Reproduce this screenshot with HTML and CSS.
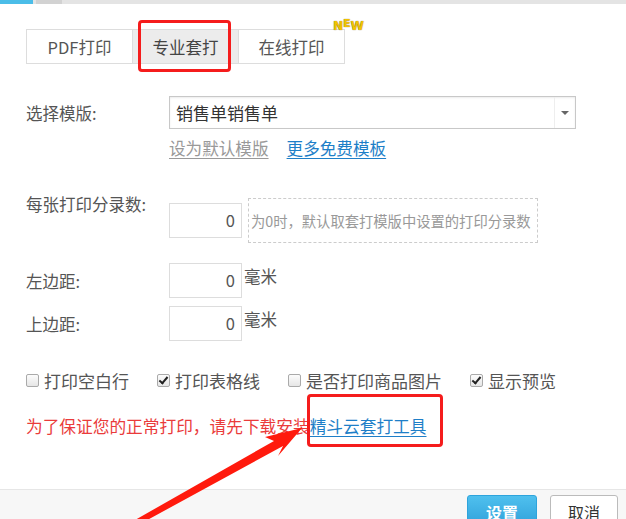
FILE: index.html
```html
<!DOCTYPE html>
<html lang="zh-CN">
<head>
  <meta charset="UTF-8" />
  <title>打印设置</title>
  <link rel="stylesheet" href="styles.css">
</head>
<body>
  <div class="topbar">
    <span class="topbar-active"></span>
    <span class="topbar-tab"></span>
  </div>

  <div class="panel">
    <div class="tabs">
      <div class="tab">PDF打印</div>
      <div class="tab active">专业套打</div>
      <div class="tab">在线打印</div>
      <span class="new-badge">N<sup>E</sup>W</span>
      <span class="mark mark-tab"></span>
    </div>

    <div class="row row-select">
      <label>选择模版:</label>
      <div class="select">
        <span>销售单销售单</span>
        <span class="select-arrow"></span>
      </div>
    </div>
    <div class="row row-links">
      <span></span>
      <div class="links">
        <a class="link-gray">设为默认模版</a>
        <a class="link-blue">更多免费模板</a>
      </div>
    </div>

    <div class="row row-count">
      <label>每张打印分录数:</label>
      <div class="field">
        <div class="num">0</div>
        <div class="hint">为0时，默认取套打模版中设置的打印分录数</div>
      </div>
    </div>

    <div class="row row-margin">
      <label>左边距:</label>
      <div class="field">
        <div class="num">0</div>
        <span class="unit">毫米</span>
      </div>
    </div>
    <div class="row row-margin">
      <label>上边距:</label>
      <div class="field">
        <div class="num">0</div>
        <span class="unit">毫米</span>
      </div>
    </div>

    <div class="checks">
      <span class="check"><i class="box"></i>打印空白行</span>
      <span class="check"><i class="box checked"></i>打印表格线</span>
      <span class="check"><i class="box"></i>是否打印商品图片</span>
      <span class="check"><i class="box checked"></i>显示预览</span>
    </div>

    <p class="notice">为了保证您的正常打印，请先下载安装<a class="tool-link">精斗云套打工具<span class="mark mark-link"></span></a></p>
  </div>

  <div class="footer">
    <button class="btn btn-primary">设置</button>
    <button class="btn">取消</button>
  </div>

  <svg class="arrow" width="626" height="519" viewBox="0 0 626 519">
    <polygon points="128,524 140,524 283,446 278,456 302,428 265,437 274,441" fill="#ff1a0d" />
  </svg>
</body>
</html>
```

FILE: styles.css
```css
body {
  margin: 0;
  width: 626px;
  height: 519px;
  overflow: hidden;
  position: relative;
  background: #fff;
  font-family: "Noto Sans CJK SC", "Noto Sans", sans-serif;
  color: #555;
  font-size: 16.5px;
}

.topbar {
  display: flex;
  height: 4px;
  background: #e4e4e4;
}

.topbar-active {
  width: 33px;
  background: #4bbde8;
}

.topbar-tab {
  width: 26px;
  margin-left: 3px;
  background: #d2d2d2;
}

.panel {
  padding: 25px 0 0 26px;
}

.tabs {
  position: relative;
  display: flex;
  width: fit-content;
}

.tab {
  box-sizing: border-box;
  width: 107px;
  height: 35px;
  line-height: 34px;
  text-align: center;
  border: 1px solid #ddd;
  margin-right: -1px;
  font-size: 16.5px;
  color: #555;
  background: #fff;
}

.tab.active {
  background: #ececec;
  color: #444;
}

.mark {
  position: absolute;
  border: 3px solid #f51c1c;
  border-radius: 4px;
}

.mark-tab {
  left: 112px;
  top: -9px;
  width: 87px;
  height: 46px;
}

.new-badge {
  position: absolute;
  left: 307px;
  top: -12px;
  font-family: "DejaVu Sans", sans-serif;
  font-weight: bold;
  font-size: 12px;
  color: #f2c200;
  text-shadow: 0 0 1px #6b5200;
}

.new-badge sup {
  font-size: 11px;
  vertical-align: 3px;
}

.row {
  display: grid;
  grid-template-columns: 143px auto;
}

.row label {
  color: #555;
}

.row-select {
  margin-top: 32px;
  align-items: center;
}

.select {
  box-sizing: border-box;
  position: relative;
  width: 407px;
  height: 33px;
  border: 1px solid #c8c8c8;
  box-shadow: inset 0 1px 2px rgba(0, 0, 0, 0.08);
  padding-left: 6px;
  line-height: 31px;
  font-size: 17px;
  color: #333;
}

.select-arrow {
  position: absolute;
  right: 0;
  top: 0;
  width: 20px;
  height: 31px;
  border-left: 1px solid #eee;
}

.select-arrow::after {
  content: "";
  position: absolute;
  left: 6px;
  top: 14px;
  border-left: 4px solid transparent;
  border-right: 4px solid transparent;
  border-top: 4px solid #666;
}

.row-links {
  margin-top: 7px;
}

.links {
  display: flex;
  gap: 18px;
  font-size: 16.6px;
}

.links a {
  text-decoration: underline;
  text-underline-offset: 3px;
}

.link-gray {
  color: #999;
}

.link-blue {
  color: #1e7fc8;
}

.row-count {
  margin-top: 38px;
}

.row-count label {
  margin-top: -6px;
}

.field {
  display: flex;
  align-items: center;
}

.num {
  box-sizing: border-box;
  width: 73px;
  height: 35px;
  border: 1px solid #ddd;
  text-align: right;
  padding-right: 6px;
  line-height: 33px;
  color: #555;
}

.hint {
  box-sizing: border-box;
  margin-left: 6px;
  width: 290px;
  height: 45px;
  border: 1px dashed #ccc;
  padding-left: 2px;
  line-height: 43px;
  font-size: 14.3px;
  color: #999;
  white-space: nowrap;
  overflow: hidden;
}

.row-margin {
  margin-top: 8px;
  align-items: center;
}

.row-count + .row-margin {
  margin-top: 20px;
}

.unit {
  margin-left: 2px;
  align-self: flex-start;
  margin-top: 1px;
}

.checks {
  display: flex;
  margin-top: 27px;
  color: #555;
  font-size: 17px;
}

.check {
  display: flex;
  align-items: center;
  margin-right: 28px;
}

.box {
  box-sizing: border-box;
  position: relative;
  width: 13px;
  height: 13px;
  border: 1px solid #aaa;
  border-radius: 2px;
  background: linear-gradient(#fcfcfc, #e6e6e6);
  margin-right: 5px;
}

.box.checked::after {
  content: "";
  position: absolute;
  left: 3px;
  top: 0;
  width: 3px;
  height: 7px;
  border-right: 2px solid #222;
  border-bottom: 2px solid #222;
  transform: rotate(40deg);
}

.notice {
  margin: 21px 0 0;
  color: #ea3b3b;
  font-size: 16.7px;
}

.tool-link {
  position: relative;
  color: #1e7fc8;
  text-decoration: underline;
  text-underline-offset: 3px;
}

.mark-link {
  left: -3px;
  top: -20px;
  width: 130px;
  height: 47px;
}

.footer {
  position: absolute;
  left: 0;
  right: 0;
  top: 489px;
  bottom: 0;
  background: #f7f7f7;
  border-top: 1px solid #e6e6e6;
  display: flex;
  justify-content: flex-end;
  align-items: flex-start;
  gap: 13px;
  padding: 5px 8px 0 0;
}

.btn {
  width: 68px;
  height: 34px;
  border: 1px solid #bbb;
  border-radius: 3px;
  background: #fff;
  font-family: "Noto Sans CJK SC", sans-serif;
  font-size: 16px;
  color: #333;
  padding: 0;
}

.btn-primary {
  width: 70px;
  border-color: #2ea4dc;
  background: linear-gradient(#4fc0ee, #2e9fd9);
  color: #fff;
  font-weight: bold;
}

.arrow {
  position: absolute;
  left: 0;
  top: 0;
  pointer-events: none;
}
```
